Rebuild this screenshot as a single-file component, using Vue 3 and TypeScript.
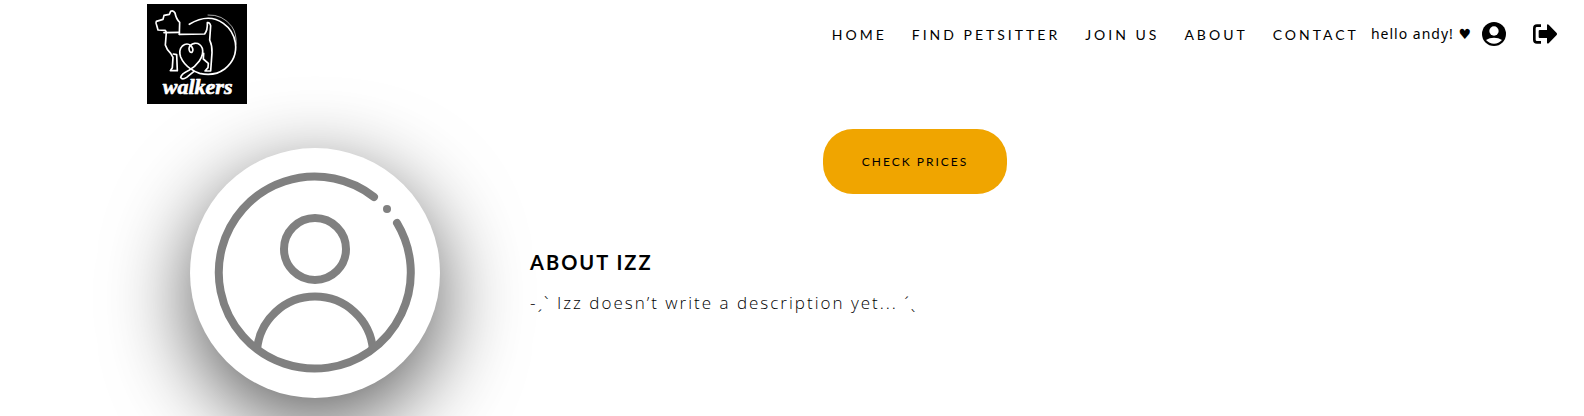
<script setup lang="ts">
interface NavItem {
  label: string
  href: string
}

const navItems: NavItem[] = [
  { label: 'HOME', href: '#home' },
  { label: 'FIND PETSITTER', href: '#petsitters' },
  { label: 'JOIN US', href: '#join' },
  { label: 'ABOUT', href: '#about' },
  { label: 'CONTACT', href: '#contact' },
]

const userName = 'andy'
const sitterName = 'Izz'
</script>

<template>
  <div class="page">
    <header class="header">
      <a class="logo" href="#home" aria-label="walkers">
        <svg viewBox="21 12 300 300" fill="none" stroke="#fff" stroke-linecap="round" stroke-linejoin="round">
          <rect x="21" y="12" width="300" height="300" fill="#000" stroke="none" />
          <g stroke-width="5">
            <path d="M118 103 L119 67 Q109 58 105 39 Q100 30 92 34 L88 43 L72 46 L69 58 L49 64 Q46 70 50 76 L54 90 L76 91 L79 97 L76 135 Q80 149 92 160 L99 172 L97 203 L91 212 L112 212 L110 164 L100 162" />
            <path d="M72 98 L118 97 M118 103 L194 102 Q203 90 202 68 Q209 66 212 77 L209 120 Q217 137 216 158 L212 213 L195 213 L204 203 L205 190 L190 177 L191 160" />
            <path d="M148 73 Q205 38 250 70 Q280 91 286 128 Q293 176 254 207 Q223 230 179 220 Q165 216 151 206 Q130 191 122 171 Q115 150 127 138 Q140 127 152 136 Q163 148 156 157 Q147 158 147 145 Q149 133 164 130 Q180 128 187 145 Q192 163 178 183 Q165 201 147 211 Q124 222 122 232 Q126 241 140 232 L162 214" />
          </g>
          <path d="M204 45 Q248 43 275 79 Q291 102 288 133" stroke-width="2" />
          <text x="173" y="282" text-anchor="middle" fill="#fff" stroke="#fff" stroke-width="2">walkers</text>
        </svg>
      </a>
      <nav class="nav" aria-label="Main">
        <a v-for="item in navItems" :key="item.href" class="nav-link" :href="item.href">{{ item.label }}</a>
      </nav>
      <div class="account">
        <span class="greeting">hello {{ userName }}! <span class="heart">♥</span></span>
        <a class="icon-link" href="#profile" aria-label="Profile">
          <svg viewBox="0 0 72 72">
            <circle cx="36" cy="36" r="36" />
            <circle cx="36" cy="27" r="14" fill="#fff" />
            <path d="M12 54 Q22 47 36 47 Q50 47 60 54 Q50 65 36 65 Q22 65 12 54Z" fill="#fff" />
          </svg>
        </a>
        <button class="icon-link logout" type="button" aria-label="Log out">
          <svg viewBox="0 0 72 72">
            <path d="M24 11 H12 Q4 11 4 19 V53 Q4 61 12 61 H24" fill="none" stroke="#000" stroke-width="8" />
            <path d="M20 24 H42 V8 Q44 5 47 8 L71 33 Q73 36 71 39 L47 64 Q44 66 42 63 V48 H20 Q17 48 17 45 V27 Q17 24 20 24Z" />
          </svg>
        </button>
      </div>
    </header>

    <main class="profile">
      <div class="avatar">
        <svg viewBox="0 0 250 250" role="img" aria-label="Profile picture" fill="none" stroke="#808080" stroke-width="8" stroke-linecap="round">
          <path d="M184 49 A96 96 0 1 0 207 75" />
          <circle cx="125" cy="101" r="31" />
          <path d="M67 202 A58.2 58.2 0 0 1 183 202" stroke-linecap="butt" />
          <circle cx="197" cy="61" r="4" fill="#808080" stroke="none" />
        </svg>
      </div>
      <div class="details">
        <button class="prices" type="button">CHECK PRICES</button>
        <section class="about">
          <h1>ABOUT {{ sitterName.toUpperCase() }}</h1>
          <p>-ˏˋ {{ sitterName }} doesn’t write a description yet... ˊˎ</p>
        </section>
      </div>
    </main>
  </div>
</template>

<style>
body {
  margin: 0;
  background: #fff;
}
</style>

<style scoped>
.page {
  min-height: 100vh;
  color: #000;
  font-family: Lato, "Noto Sans", sans-serif;
}

.header {
  display: flex;
  align-items: flex-start;
  padding: 4px 27px 0 147px;
}

.logo {
  position: relative;
  z-index: 1;
  width: 100px;
  height: 100px;
  margin-right: auto;
}

.logo svg,
.icon-link svg,
.avatar svg {
  display: block;
  width: 100%;
  height: 100%;
}

.logo text {
  font: italic 700 66px "Liberation Serif", serif;
}

.nav {
  display: flex;
  gap: 25px;
  padding-top: 20px;
}

.nav-link {
  color: #000;
  font-size: 14px;
  line-height: 22px;
  letter-spacing: 3px;
  text-decoration: none;
  white-space: nowrap;
}

.account {
  display: flex;
  align-items: center;
  padding: 18px 0 0 12px;
}

.greeting {
  font-family: "Noto Sans", sans-serif;
  font-size: 14px;
  line-height: 24px;
  letter-spacing: 1px;
  white-space: nowrap;
}

.heart {
  font-family: "DejaVu Sans", sans-serif;
}

.icon-link {
  width: 24px;
  height: 24px;
  margin-left: 10px;
  padding: 0;
  border: 0;
  background: none;
}

.logout {
  margin-left: 27px;
  cursor: pointer;
}

.profile {
  display: flex;
  gap: 90px;
  padding: 25px 12% 0;
}

.avatar {
  flex: none;
  width: 250px;
  height: 250px;
  margin-top: 19px;
  border-radius: 50%;
  background: #fff;
  box-shadow: 0 25px 84px rgba(0, 0, 0, 0.65);
}

.details {
  flex: 1;
  max-width: 770px;
}

.prices {
  display: block;
  margin: 0 auto;
  padding: 22px 39px;
  border: 0;
  border-radius: 30px;
  background: #f0a500;
  color: #000;
  font: 12px/21px Lato, sans-serif;
  letter-spacing: 2px;
  cursor: pointer;
}

.about {
  padding-top: 53px;
}

.about h1 {
  margin: 0;
  font-size: 20px;
  line-height: 30px;
  letter-spacing: 2px;
}

.about p {
  margin: 13px 0 0;
  font-family: "Open Sans", "Noto Sans", sans-serif;
  font-size: 17px;
  font-weight: 300;
  line-height: 26px;
  letter-spacing: 2px;
}
</style>
